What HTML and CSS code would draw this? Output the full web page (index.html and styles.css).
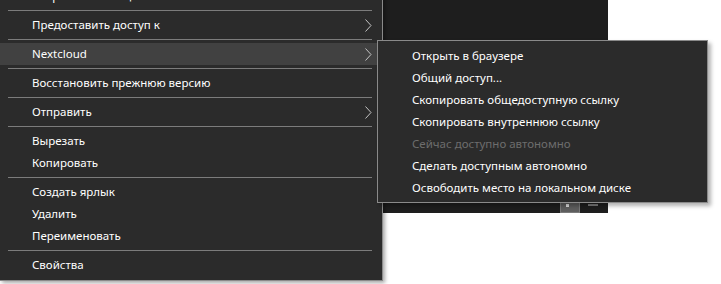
FILE: index.html
```html
<!DOCTYPE html>
<html lang="ru">
  <head>
    <meta charset="UTF-8" />
    <meta name="viewport" content="width=device-width, initial-scale=1.0" />
    <title>Контекстное меню</title>
    <link rel="stylesheet" href="styles.css">
  </head>
  <body>
    <div class="scene">
      <ul class="menu">
        <li class="menu-item">Открыть с помощью</li>
        <li class="sep"></li>
        <li class="menu-item has-sub">
          <span>Предоставить доступ к</span>
          <svg class="chevron" width="7" height="13" viewBox="0 0 7 13"><polyline points="0.5,0.5 6,6.5 0.5,12.5" /></svg>
        </li>
        <li class="sep"></li>
        <li class="menu-item has-sub active">
          <span>Nextcloud</span>
          <svg class="chevron" width="7" height="13" viewBox="0 0 7 13"><polyline points="0.5,0.5 6,6.5 0.5,12.5" /></svg>
        </li>
        <li class="sep"></li>
        <li class="menu-item">Восстановить прежнюю версию</li>
        <li class="sep"></li>
        <li class="menu-item has-sub">
          <span>Отправить</span>
          <svg class="chevron" width="7" height="13" viewBox="0 0 7 13"><polyline points="0.5,0.5 6,6.5 0.5,12.5" /></svg>
        </li>
        <li class="sep"></li>
        <li class="menu-item">Вырезать</li>
        <li class="menu-item">Копировать</li>
        <li class="sep"></li>
        <li class="menu-item">Создать ярлык</li>
        <li class="menu-item">Удалить</li>
        <li class="menu-item">Переименовать</li>
        <li class="sep"></li>
        <li class="menu-item">Свойства</li>
      </ul>

      <!-- explorer window behind the submenu -->
      <div class="window">
        <div class="statusbar">
          <span class="view-btn on"><i></i></span>
          <span class="view-line"></span>
        </div>
      </div>

      <ul class="submenu">
        <li class="menu-item">Открыть в браузере</li>
        <li class="menu-item">Общий доступ...</li>
        <li class="menu-item">Скопировать общедоступную ссылку</li>
        <li class="menu-item">Скопировать внутреннюю ссылку</li>
        <li class="menu-item disabled">Сейчас доступно автономно</li>
        <li class="menu-item">Сделать доступным автономно</li>
        <li class="menu-item">Освободить место на локальном диске</li>
      </ul>
    </div>
  </body>
</html>
```

FILE: styles.css
```css
body {
  margin: 0;
  background-color: #fff;
  font-family: "Segoe UI", "Noto Sans", sans-serif;
  font-size: 11.5px;
  overflow: hidden;
}
ul {
  list-style: none;
  margin: 0;
  padding: 0;
}
.scene {
  position: relative;
  display: flex;
  align-items: flex-start;
  height: 284px;
}
.menu {
  box-sizing: border-box;
  width: 383px;
  flex-shrink: 0;
  margin-top: -15px;
  padding-bottom: 4px;
  background-color: #2b2b2b;
  border-right: 1px solid #8a8a8a;
  border-bottom: 1px solid #8a8a8a;
  box-shadow: 2px 2px 4px rgba(0, 0, 0, 0.35);
  position: relative;
  z-index: 1;
}
.menu-item {
  display: flex;
  align-items: center;
  justify-content: space-between;
  height: 22px;
  line-height: 22px;
  padding: 0 10px 0 32px;
  color: #fff;
  white-space: nowrap;
}
.menu-item.active {
  background-color: #414141;
}
.menu-item.disabled {
  color: #6d6d6d;
}
.chevron {
  display: block;
  fill: none;
  stroke: #c4c4c4;
  stroke-width: 1;
}
.sep {
  height: 1px;
  margin: 3px 10px 3px 8px;
  background-color: #7c7c7c;
}
.window {
  width: 225px;
  height: 213px;
  flex-shrink: 0;
  background-color: #1e1e1e;
  display: flex;
  flex-direction: column;
  justify-content: flex-end;
}
.statusbar {
  display: flex;
  justify-content: flex-end;
  align-items: flex-start;
  gap: 8px;
  height: 11px;
  padding-right: 10px;
}
.view-btn {
  box-sizing: border-box;
  width: 20px;
  height: 11px;
  background-color: #5e5e5e;
  border: 1px solid #7a7a7a;
  padding-left: 5px;
}
.view-btn i {
  display: block;
  width: 3px;
  height: 3px;
  margin-top: 1px;
  background-color: #ddd;
}
.view-line {
  width: 10px;
  height: 2px;
  margin-top: 2px;
  background-color: #7a7a7a;
}
.submenu {
  position: absolute;
  left: 377px;
  top: 40px;
  z-index: 2;
  box-sizing: border-box;
  width: 331px;
  padding: 4px 0 3px;
  background-color: #2b2b2b;
  border: 1px solid #8a8a8a;
  box-shadow: 3px 3px 4px rgba(0, 0, 0, 0.3);
}
.submenu .menu-item {
  padding-left: 34px;
}
```
